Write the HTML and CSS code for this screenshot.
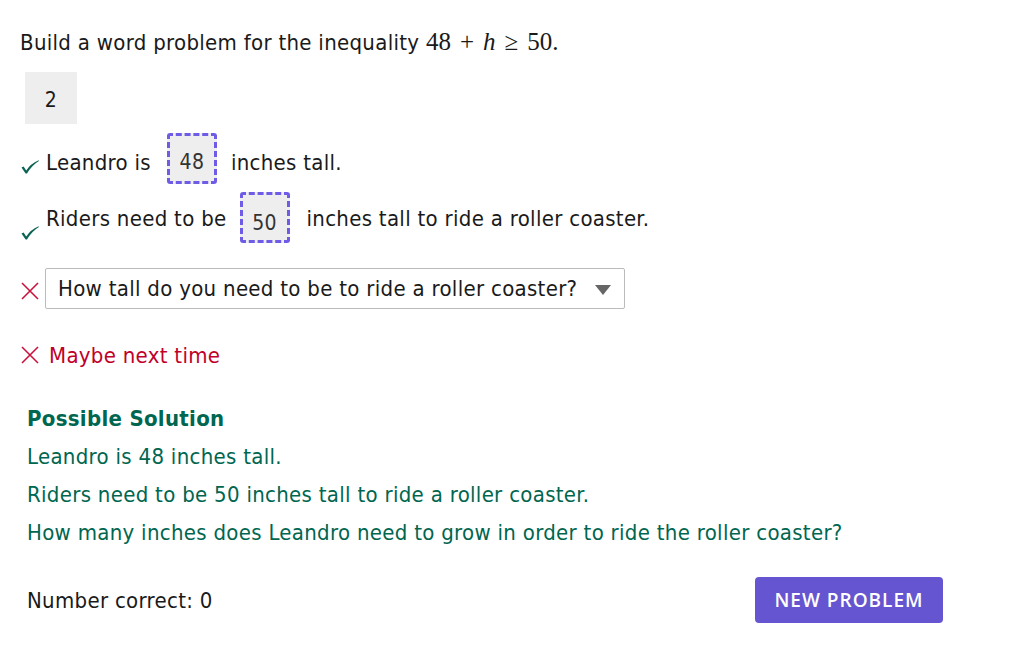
FILE: index.html
```html
<!DOCTYPE html>
<html>
<head>
<meta charset="utf-8">
<link rel="stylesheet" href="styles.css">
</head>
<body>
<div class="page">
  <p class="prompt">Build a word problem for the inequality <span class="math">48<span class="op">+</span><i>h</i><span class="op">≥</span>50.</span></p>
  <div class="tile">2</div>

  <div class="row row1">
    <svg class="check" width="20" height="14" viewBox="0 0 20 14"><path d="M1.5 7.6 L3.6 6.6 L6.2 10.6 Q10.5 3.6 18.6 0.2 L18.9 0.9 Q12 5 7 13.4 L5.6 13.6 Z" fill="#0b6354"/></svg>
    <span class="txt">Leandro is</span>
    <span class="slot">48</span>
    <span class="txt">inches tall.</span>
  </div>
  <div class="row row2">
    <svg class="check low" width="20" height="14" viewBox="0 0 20 14"><path d="M1.5 7.6 L3.6 6.6 L6.2 10.6 Q10.5 3.6 18.6 0.2 L18.9 0.9 Q12 5 7 13.4 L5.6 13.6 Z" fill="#0b6354"/></svg>
    <span class="txt">Riders need to be</span>
    <span class="slot slot2">50</span>
    <span class="txt">inches tall to ride a roller coaster.</span>
  </div>
  <div class="row row3">
    <svg class="cross" width="20" height="20" viewBox="0 0 20 20"><path d="M2 2 L18 18 M18 2 L2 18" stroke="#c8143c" stroke-width="1.6" fill="none"/></svg>
    <div class="select">
      <span>How tall do you need to be to ride a roller coaster?</span>
      <svg class="caret" width="16" height="11" viewBox="0 0 16 11"><path d="M0 0 H16 L8 10 Z" fill="#666"/></svg>
    </div>
  </div>

  <div class="feedback">
    <svg class="cross" width="20" height="20" viewBox="0 0 20 20"><path d="M2 2 L18 18 M18 2 L2 18" stroke="#c8143c" stroke-width="1.6" fill="none"/></svg>
    <span>Maybe next time</span>
  </div>

  <div class="solution">
    <h3>Possible Solution</h3>
    <p>Leandro is 48 inches tall.</p>
    <p>Riders need to be 50 inches tall to ride a roller coaster.</p>
    <p>How many inches does Leandro need to grow in order to ride the roller coaster?</p>
  </div>

  <div class="footer">
    <span>Number correct: 0</span>
    <button class="btn">NEW PROBLEM</button>
  </div>
</div>
</body>
</html>
```
FILE: styles.css
```css
html, body {
  margin: 0;
  background: #fff;
}
.page {
  font-family: "Liberation Sans Narrow", "DejaVu Sans Condensed", sans-serif;
  font-size: 22px;
  letter-spacing: 0.3px;
  color: #1a1a1a;
  padding: 28px 0 0 20px;
  width: 960px;
}
.prompt {
  margin: 0;
  height: 28px;
  line-height: 28px;
}
.math {
  font-family: "Liberation Serif", serif;
  font-size: 25px;
  letter-spacing: 0;
}
.op { margin: 0 9px; }
.tile {
  margin: 16px 0 0 5px;
  width: 52px;
  height: 52px;
  background: #eeeeee;
  display: flex;
  align-items: center;
  justify-content: center;
  font-size: 21px;
  padding-top: 4px;
  box-sizing: border-box;
}
.row {
  display: flex;
  align-items: center;
}
.row1 {
  margin-top: 9px;
  height: 51px;
}
.row2 {
  margin-top: 8px;
  height: 51px;
}
.check {
  flex: none;
  margin-right: 6px;
  margin-top: 16px;
}
.check.low { margin-top: 30px; }
.row1 .txt { padding-top: 7px; }
.row2 .txt { padding-top: 2px; }
.slot {
  box-sizing: border-box;
  width: 50px;
  height: 51px;
  border: 3px dashed #6e5ce6;
  border-radius: 3px;
  background: #eeeeee;
  display: flex;
  align-items: center;
  justify-content: center;
  margin: 0 14px 0 16px;
  font-size: 21px;
  color: #333;
  padding-top: 7px;
}
.slot2 { margin-left: 13px; margin-right: 17px; padding-top: 10px; }
.row3 {
  margin-top: 25px;
  height: 40px;
}
.cross { flex: none; }
.row3 .cross { margin-top: 6px; margin-right: 5px; }
.select {
  box-sizing: border-box;
  width: 580px;
  height: 41px;
  border: 1px solid #bbbbbb;
  border-radius: 2px;
  display: flex;
  align-items: center;
  justify-content: space-between;
  padding: 0 13px 0 12px;
}
.caret { margin-top: 4px; }
.feedback {
  margin-top: 35px;
  display: flex;
  align-items: center;
  gap: 9px;
  color: #c0002a;
  height: 24px;
}
.solution {
  margin-top: 37px;
  padding-left: 7px;
  color: #00664f;
}
.solution h3 {
  margin: 0;
  font-size: 22px;
  font-weight: bold;
  line-height: 30px;
}
.solution p {
  margin: 8px 0 0;
  line-height: 30px;
}
.footer {
  margin-top: 29px;
  padding-left: 7px;
  display: flex;
  align-items: center;
  justify-content: space-between;
  width: 916px;
}
.btn {
  font-family: "Open Sans", "Noto Sans", sans-serif;
  font-weight: 600;
  font-size: 19px;
  color: #fff;
  background: #6655d0;
  border: none;
  border-radius: 4px;
  width: 188px;
  height: 46px;
  letter-spacing: 1px;
}
```
